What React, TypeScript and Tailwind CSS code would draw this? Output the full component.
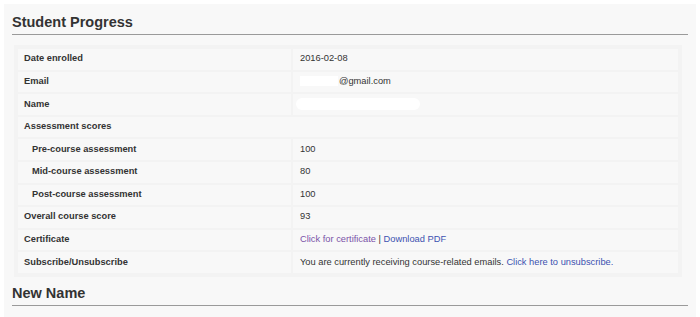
const rows: { label: string; value: React.ReactNode; indent?: boolean; span?: boolean }[] = [
  { label: "Date enrolled", value: "2016-02-08" },
  {
    label: "Email",
    value: (
      <span>
        <span className="inline-block w-[38px] h-[10px] bg-white align-middle mr-[1px]" />
        @gmail.com
      </span>
    ),
  },
  {
    label: "Name",
    value: <span className="inline-block w-[124px] h-[12px] bg-white rounded-full align-middle -ml-[4px]" />,
  },
  { label: "Assessment scores", value: null, span: true },
  { label: "Pre-course assessment", value: "100", indent: true },
  { label: "Mid-course assessment", value: "80", indent: true },
  { label: "Post-course assessment", value: "100", indent: true },
  { label: "Overall course score", value: "93" },
  {
    label: "Certificate",
    value: (
      <span>
        <a className="text-[#7b53a8]">Click for certificate</a> | <a className="text-[#3c52b0]">Download PDF</a>
      </span>
    ),
  },
  {
    label: "Subscribe/Unsubscribe",
    value: (
      <span>
        You are currently receiving course-related emails.{" "}
        <a className="text-[#3c52b0]">Click here to unsubscribe.</a>
      </span>
    ),
  },
]

function Heading({ children }: { children: React.ReactNode }) {
  return (
    <h2 className="text-[14.5px] font-bold text-[#333] leading-[17px] pb-[3px] border-b border-[#9a9a9a]">
      {children}
    </h2>
  )
}

export default function App() {
  return (
    <div className="w-[700px] h-[317px] bg-white overflow-hidden font-['Liberation_Sans',Arial,sans-serif]">
      <div className="mx-[4px] mt-[4px] bg-[#f8f8f8] px-[8px] pt-[10px] h-[313px]">
        <Heading>Student Progress</Heading>
        <div className="mt-[10px] ml-[2px] mr-[6px] bg-[#f3f3f3] p-[2px]">
          <table className="w-full border-separate border-spacing-[2px] text-[9.3px] text-[#333]">
            <tbody>
              {rows.map((r) => (
                <tr key={r.label} className="h-[20.6px]">
                  {r.span ? (
                    <td colSpan={2} className="bg-[#f8f8f8] px-[6px] font-bold">
                      {r.label}
                    </td>
                  ) : (
                    <>
                      <td className={`w-[273px] bg-[#f8f8f8] font-bold ${r.indent ? "pl-[14px]" : "pl-[6px]"}`}>
                        {r.label}
                      </td>
                      <td className="bg-[#f8f8f8] pl-[7px]">{r.value}</td>
                    </>
                  )}
                </tr>
              ))}
            </tbody>
          </table>
        </div>
        <div className="mt-[8px]">
          <Heading>New Name</Heading>
        </div>
      </div>
    </div>
  )
}
